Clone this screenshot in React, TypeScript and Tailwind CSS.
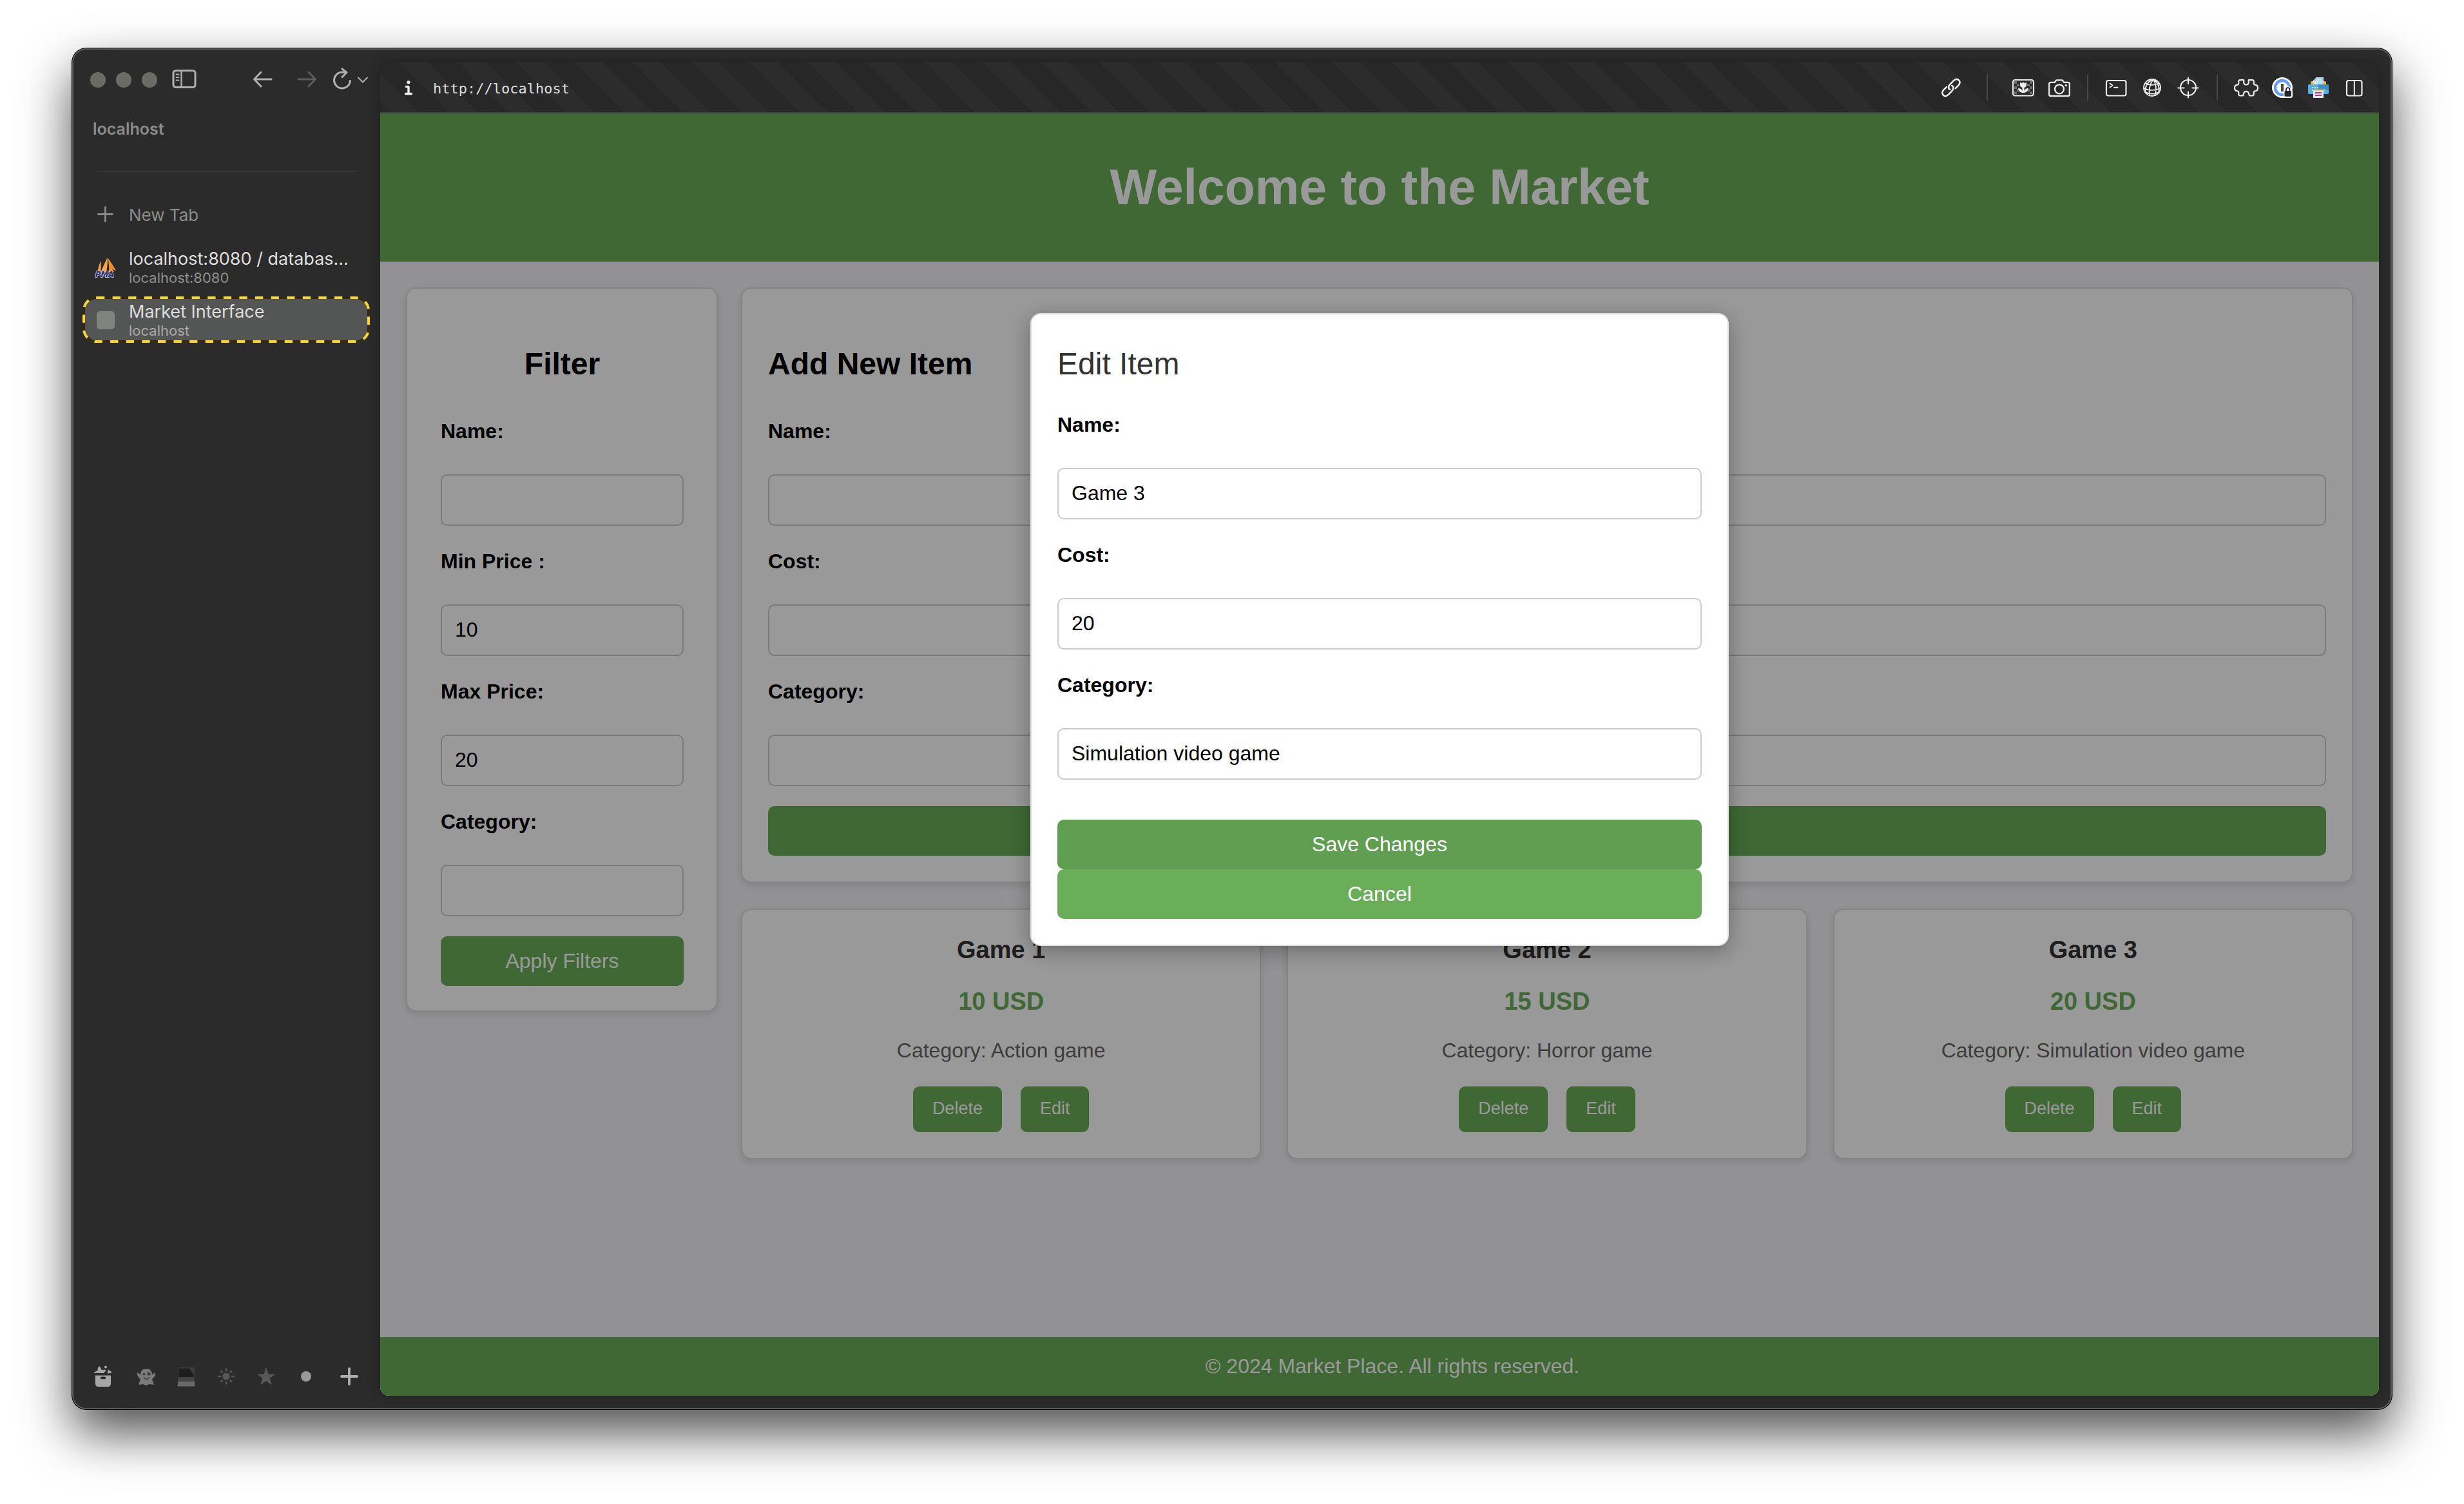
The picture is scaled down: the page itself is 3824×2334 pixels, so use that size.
import React from "react";

type IconProps = { children: React.ReactNode; className?: string };

/* 40x40 drawing area shared by every chrome icon */
function Icon({ children, className = "" }: IconProps) {
  return (
    <svg
      viewBox="0 0 40 40"
      className={`size-10 shrink-0 ${className}`}
      fill="none"
      stroke="currentColor"
      strokeWidth="2.4"
      strokeLinecap="round"
      strokeLinejoin="round"
      aria-hidden="true"
    >
      {children}
    </svg>
  );
}

function IconButton({ label, children, className = "" }: { label: string; children: React.ReactNode; className?: string }) {
  return (
    <button type="button" aria-label={label} className={`flex shrink-0 items-center justify-center ${className}`}>
      {children}
    </button>
  );
}

function WindowControls() {
  return (
    <div className="flex h-[94px] items-center pr-[17px] pl-[26px] text-[#b0b0b0]">
      <div className="flex gap-4">
        <button type="button" aria-label="Close" className="size-6 rounded-full bg-[#6b6c66]" />
        <button type="button" aria-label="Minimize" className="size-6 rounded-full bg-[#6b6c66]" />
        <button type="button" aria-label="Zoom" className="size-6 rounded-full bg-[#6b6c66]" />
      </div>
      <IconButton label="Toggle sidebar" className="ml-[22px]">
        <Icon>
          <rect x="3" y="5.500" width="34" height="26" rx="4" strokeWidth="3" />
          <path d="M15.500 6v25" strokeWidth="2.400" />
          <path d="M7.500 11.500h4M7.500 16h4M7.500 20.500h4" strokeWidth="1.800" />
        </Icon>
      </IconButton>
      <div className="ml-auto flex items-center">
        <IconButton label="Back">
          <Icon>
            <path d="M33 19H7M17 8 6.500 19 17 30" strokeWidth="3" />
          </Icon>
        </IconButton>
        <IconButton label="Forward" className="ml-7 text-[#5d5d5d]">
          <Icon>
            <path d="M7 19h26M23 8l10.500 11L23 30" strokeWidth="3" />
          </Icon>
        </IconButton>
        <IconButton label="Reload" className="ml-[15px]">
          <Icon>
            <path d="M32.500 21.500a12.500 12.500 0 1 1-12.500-13.500h6" strokeWidth="3" />
            <path d="M20 2.800 27 8.500 20 15.500" strokeWidth="3" />
          </Icon>
        </IconButton>
        <IconButton label="History" className="ml-0.5">
          <svg viewBox="0 0 20 20" className="size-5" fill="none" stroke="currentColor" strokeWidth="2" strokeLinecap="round" strokeLinejoin="round">
            <path d="m3 6.500 7 7 7-7" />
          </svg>
        </IconButton>
      </div>
    </div>
  );
}

function SailboatIcon() {
  return (
    <svg viewBox="0 0 40 40" className="size-10 shrink-0" aria-hidden="true">
      <path d="M7 27C9 20 11 12 12.500 10c.5 6 .3 12-.5 17z" fill="#e8a55a" />
      <path d="M12.500 27c3-7 7-16 10-22 .8 7 0 15-1.500 22z" fill="#f5a64a" />
      <path d="M23 5c5 6 9 13 13 20l-6-2 3 4h-8c.5-7 0-15-2-22z" fill="#ee8f2c" />
      <text x="4" y="35" fontFamily="DejaVu Sans" fontSize="11.500" fontWeight="700" fontStyle="italic" fill="#2d2f6b" stroke="#c9cbe6" strokeWidth="1.600" paintOrder="stroke">
        PMA
      </text>
    </svg>
  );
}

function TabItem({ title, host, icon, selected = false }: { title: string; host: string; icon: React.ReactNode; selected?: boolean }) {
  return (
    <button
      type="button"
      aria-current={selected ? "page" : undefined}
      className={`relative flex h-[72px] items-center gap-4 rounded-[22px] pt-0.5 pr-4 pl-4 text-left ${selected ? "bg-[#545655]" : ""}`}
    >
      {icon}
      <span className="flex min-w-0 flex-1 flex-col">
        <span className="truncate text-[27px] leading-8 text-[#dedede]">{title}</span>
        <span className={`truncate text-[22px] leading-[26px] ${selected ? "text-[#a8a9a8]" : "text-[#8f8f8f]"}`}>{host}</span>
      </span>
      {selected && (
        <span className="absolute inset-0">
          <svg className="size-full overflow-visible" fill="none" strokeWidth="4" aria-hidden="true">
            <rect x="2" y="2" width="442" height="68" rx="20" stroke="#332a10" />
            <rect x="2" y="2" width="442" height="68" rx="20" stroke="#f9d535" strokeDasharray="12.300 12.300" />
          </svg>
        </span>
      )}
    </button>
  );
}

function Spaces() {
  return (
    <div className="mt-auto flex h-[98px] items-center gap-[22px] pl-[26px] text-[#a6a6a6]">
      <IconButton label="Archive" className="mr-[5px]">
        <Icon>
          <g fill="currentColor" stroke="none">
            <path d="M8 18.500h24v13a4.500 4.500 0 0 1-4.500 4.500h-15A4.500 4.500 0 0 1 8 31.500z" />
            <path d="M6 14.500c1-2 3-2.500 5-3l1.500-6c.5-1.500 2-1.500 2.700-.3L18 10l5-.5c1.500.5 1 2-.5 3.500-.5 1.500-1.500 2-3 2H7c-1 0-1.500 0-1-.5z" />
            <circle cx="24" cy="5.500" r="2" />
            <path d="m28 9.500 5 3.500c.5 1 0 1.500-1 1.800l-4 .7c-1 0-1.500-.5-1.300-1.500z" />
          </g>
          <rect x="16" y="20.500" width="8" height="3.800" rx="1.500" fill="#2b2b2b" stroke="none" />
        </Icon>
      </IconButton>
      <IconButton label="Ghost space">
        <Icon className="text-[#7a7a7a]">
          <path d="M20 8c6 0 9 4 9 9l5-3c.5 5-2 8-5 10l3 9-7-1-5 2-5-2-7 1 3-9c-3-2-5.500-5-5-10l5 3c0-5 3-9 9-9z" fill="currentColor" stroke="none" />
          <circle cx="16.500" cy="16.500" r="1.800" fill="#3a3a3a" stroke="none" />
          <circle cx="24" cy="16" r="2.600" fill="#3a3a3a" stroke="none" />
          <path d="M16.500 22c2 3 6 3 8 0" stroke="#444" strokeWidth="1.800" />
        </Icon>
      </IconButton>
      <IconButton label="Laptop space">
        <Icon>
          <g stroke="none">
            <path d="M8 6h25v15H8z" fill="#3b3b3b" />
            <path d="M8.500 7.500h16l7 9.500v4h-23z" fill="#1e1e1e" />
            <path d="M8 21h24l1 7H7z" fill="#444" />
            <path d="M7 28h26v7.500H6.500z" fill="#6a6a6a" />
          </g>
        </Icon>
      </IconButton>
      <IconButton label="Sun space">
        <Icon className="text-[#585858]">
          <circle cx="20" cy="20" r="5.600" fill="currentColor" stroke="none" />
          <path d="M20 8.500v2.500M20 29v2.500M8.500 20H11M29 20h2.500M11.900 11.900l1.700 1.700M26.400 26.400l1.700 1.700M11.900 28.100l1.700-1.700M26.400 13.600l1.700-1.700" strokeWidth="2.600" />
        </Icon>
      </IconButton>
      <IconButton label="Star space">
        <Icon className="text-[#585858]">
          <path d="M20 7.500 23.200 17H33l-7.900 5.800L28 32.400l-8-5.700-8 5.700 2.900-9.600L7 17h9.800z" fill="currentColor" strokeWidth="1" />
        </Icon>
      </IconButton>
      <IconButton label="Dot space">
        <Icon className="text-[#999]">
          <circle cx="20" cy="20" r="8" fill="currentColor" stroke="none" />
        </Icon>
      </IconButton>
      <IconButton label="New space" className="ml-[5px]">
        <Icon className="text-[#b0b0b0]">
          <path d="M20 8v24M8 20h24" strokeWidth="3.800" />
        </Icon>
      </IconButton>
    </div>
  );
}

function Sidebar() {
  return (
    <aside className="flex w-[476px] shrink-0 flex-col font-['Inter',sans-serif]">
      <WindowControls />
      <p className="flex h-[58px] items-center pt-0.5 pl-[30px] text-[25px] font-semibold text-[#8c8c8c]">localhost</p>
      <hr className="mt-9 mr-9 ml-[34px] border-[#474747]" />
      <nav className="mt-[30px] mr-4 ml-3.5 flex flex-col gap-2.5">
        <button type="button" className="flex h-[72px] items-center gap-4 pt-0.5 pl-4 text-[26px] text-[#8c8c8c]">
          <Icon>
            <path d="M19.500 8.500v22M8.500 19.500h22" strokeWidth="2.800" />
          </Icon>
          New Tab
        </button>
        <TabItem title="localhost:8080 / databas..." host="localhost:8080" icon={<SailboatIcon />} />
        <TabItem
          selected
          title="Market Interface"
          host="localhost"
          icon={
            <span className="flex size-10 shrink-0 items-center justify-center">
              <span className="size-7 rounded-[5px] bg-[#818381]" />
            </span>
          }
        />
      </nav>
      <Spaces />
    </aside>
  );
}

function Toolbar() {
  return (
    <div className="flex h-20 items-center border-b-2 border-[#414141] bg-[repeating-linear-gradient(45deg,#272727_0_12px,#2c2c2c_12px_43px,#272727_43px_64px)] pt-0.5 pr-[18px] pl-[24px] text-[#ececec]">
      <IconButton label="Site information">
        <Icon>
          <circle cx="20" cy="11.500" r="2.600" fill="currentColor" stroke="none" />
          <path d="M16.500 18.500H20V29M15.500 29.500h9" strokeWidth="3.400" />
        </Icon>
      </IconButton>
      <input
        aria-label="Address"
        defaultValue="http://localhost"
        className="ml-[18px] h-10 w-full min-w-0 flex-1 bg-transparent pt-0.5 font-['DejaVu_Sans_Mono',monospace] text-[22px] text-[#dcdcdc] outline-none"
      />
      <IconButton label="Copy link">
        <Icon>
          <path d="M18.300 22.900c-3-1.600-3-5 .2-8.200l5-5c3-3 6.300-3.300 8.500-1.200s2 5.300-.9 8.300l-4.300 4.300" strokeWidth="2.600" />
          <path d="M21.200 16.900c3.200 1.600 3.300 5.200 0 8.500l-5 5c-3 3-6.200 3.200-8.400 1.100s-1.900-5.400 1-8.300l4-4" strokeWidth="2.600" />
        </Icon>
      </IconButton>
      <span className="mx-[35px] h-10 w-0.5 bg-[#484848]" />
      <div className="flex gap-4">
        <IconButton label="Picture in page">
          <Icon>
            <g fill="#6d6d6d" stroke="none">
              <path d="M6 10h4v4H6zM10 14h4v4h-4zM6 18h4v4H6zM10 22h4v4h-4zM6 26h4v4H6zM30 10h4v4h-4zM26 14h4v4h-4zM30 18h4v4h-4zM26 22h4v4h-4zM30 26h4v4h-4z" />
            </g>
            <rect x="4" y="8" width="32" height="24.500" rx="3.500" strokeWidth="2.200" />
            <path d="M15 11.500l2.700 1.800 2.300-2 2.300 2 2.700-1.800v4.500c0 2-1.500 3.500-3.500 3.900V25c1-2.500 3-4 6.500-4.300-.5 4.500-3.500 7.300-8 7.300s-7.500-2.800-8-7.300c3.500.3 5.500 1.800 6.500 4.300v-5.100c-2-.4-3.500-1.900-3.500-3.900z" fill="currentColor" stroke="none" />
          </Icon>
        </IconButton>
        <IconButton label="Capture">
          <Icon>
            <path d="M6.500 11.800h6.300l2-2.800c.4-.5.800-.7 1.400-.7h7.600c.6 0 1 .2 1.400.7l2 2.800h6.300c1.400 0 2.300.9 2.300 2.300v16.600c0 1.400-.9 2.300-2.300 2.300h-27c-1.400 0-2.300-.9-2.300-2.300V14.100c0-1.400.9-2.300 2.300-2.300z" strokeWidth="2.300" />
            <circle cx="20" cy="22.300" r="7" strokeWidth="2.300" />
            <circle cx="30.300" cy="16.500" r="1.700" fill="currentColor" stroke="none" />
          </Icon>
        </IconButton>
      </div>
      <span className="mx-[23px] h-10 w-0.5 bg-[#484848]" />
      <div className="flex gap-4">
        <IconButton label="Console">
          <Icon>
            <rect x="5" y="9" width="30.500" height="23.500" rx="3" strokeWidth="2.200" />
            <path d="m10.500 13.500 4 3-4 3M17 19.700h5.500" strokeWidth="2" />
          </Icon>
        </IconButton>
        <IconButton label="Network">
          <Icon>
            <g strokeWidth="1.900">
              <circle cx="20" cy="20" r="13" />
              <path d="M22 7c-5 6-7.500 15-6 25.500M22 7c4 7 5 16 2.500 25M22 7C14 10 9 16 9.500 27M22 7c6.500 4 9.500 11 8.500 20M9.500 13c7 3.500 14.500 3.500 21 0M7.200 20.500c7.500 4.500 18 4.500 25.600 0M9.500 27.500c6.500 2.500 14.500 2.500 21 0" />
            </g>
          </Icon>
        </IconButton>
        <IconButton label="Inspect">
          <Icon>
            <circle cx="20" cy="20" r="12" strokeWidth="2.200" />
            <path d="M20 4.800v9M20 26.500v9M4.500 20.500h9M26.500 20.500h9" strokeWidth="2.200" />
          </Icon>
        </IconButton>
      </div>
      <span className="mx-6 h-10 w-0.5 bg-[#484848]" />
      <div className="flex gap-4">
        <IconButton label="Extensions">
          <Icon className="overflow-visible">
            <path d="M10.500 8.200h5.500c.5.800.4 2 .2 3.100-.4 2.500 1.400 4.200 3.800 4.200s4.200-1.700 3.800-4.200c-.2-1.100-.3-2.300.2-3.100h5.500c1.700 0 2.500 1.300 2.300 3-.4 2.700.2 4.400 1.700 4.400 2.800.1 4.500 2 4.500 4.900s-1.700 4.800-4.500 4.900c-1.500 0-2.100 1.500-1.700 4 .2 1.700-.6 2.900-2.300 2.900h-4.500c-.7-.9-.8-2.100-1.100-3.300-.5-2-1.900-3.100-3.900-3.100s-3.400 1.100-3.900 3.100c-.3 1.200-.4 2.400-1.100 3.300h-4.500c-1.700 0-2.500-1.200-2.300-2.900.4-2.500-.2-4-1.700-4-2.800-.1-4.500-2-4.500-4.900s1.700-4.800 4.500-4.900c1.500 0 2.100-1.700 1.700-4.400-.2-1.700.6-3 2.300-3z" strokeWidth="2.200" />
          </Icon>
        </IconButton>
        <IconButton label="Password manager">
          <Icon>
            <g stroke="none">
              <circle cx="20" cy="20" r="16" fill="#fff" />
              <circle cx="20" cy="20" r="13.200" fill="#619dfb" />
              <circle cx="20" cy="20" r="8.800" fill="#fff" />
              <rect x="18" y="14" width="4" height="12" fill="#4a4a4a" />
              <path d="M22 26c0-2 1-3 2-3.500.5-3 2-4.500 4.500-4.500s4.500 1.800 4.700 4.500c1.800.8 2.800 1.800 2.800 4V33c0 2-1 3-3 3h-8c-2 0-3-1-3-3z" fill="#fff" />
              <rect x="23.500" y="25" width="10.500" height="8.800" rx="1.500" fill="#262626" />
            </g>
            <path d="M26 25v-2c0-1.800 1-2.800 2.700-2.800s2.700 1 2.700 2.800v2" stroke="#262626" strokeWidth="1.800" />
          </Icon>
        </IconButton>
        <IconButton label="Print">
          <Icon>
            <g stroke="none">
              <rect x="8" y="10" width="24" height="10" rx="2" fill="#f9b42a" />
              <path d="M17 4h11v12H12V9z" fill="#cfe6f8" />
              <path d="M20 4h8v12h-8z" fill="#b9daf3" />
              <path d="M17 4v5h-5z" fill="#8fc2e8" />
              <path d="M6 15h28c1.300 0 2 .7 2 2v11c0 1.300-.7 2-2 2H6c-1.300 0-2-.7-2-2V17c0-1.300.7-2 2-2z" fill="#53aeea" />
              <path d="M20 15h14c1.300 0 2 .7 2 2v6H20z" fill="#3f8fc4" />
              <path d="M10 19h2v2h-2zM14 19h2v2h-2zM18 19h2v2h-2z" fill="#d9effc" />
              <path d="M10 23h20v2H10z" fill="#f5d34b" />
              <path d="M12 25h16v11H12z" fill="#dcebfb" />
              <path d="M15 27h10v2H15zM15 31h10v2H15z" fill="#c7308d" />
            </g>
          </Icon>
        </IconButton>
        <IconButton label="Split view">
          <Icon>
            <rect x="8" y="9" width="23.500" height="23.500" rx="3" strokeWidth="2.200" />
            <path d="M19.800 9v23.500" strokeWidth="2" />
          </Icon>
        </IconButton>
      </div>
    </div>
  );
}

function Field({ id, label, value = "" }: { id: string; label: string; value?: string }) {
  return (
    <div className="mb-[37px] flex flex-col gap-[49px] last:mb-0">
      <label htmlFor={id} className="text-[32px] leading-9 font-bold text-black">{label}</label>
      <input
        id={id}
        type="text"
        defaultValue={value}
        className="h-20 w-full rounded-[10px] border-2 border-[#ccc] bg-white px-5 pb-0.5 text-[32px] text-black outline-none"
      />
    </div>
  );
}

function WideButton({ children, className = "bg-[#6aae59]" }: { children: React.ReactNode; className?: string }) {
  return (
    <button type="button" className={`block h-[77px] w-full rounded-[10px] pb-0.5 text-[32px] text-white ${className}`}>
      {children}
    </button>
  );
}

const card = "rounded-2xl border-2 border-[#ddd] bg-white shadow-[0_4px_12px_rgba(0,0,0,0.12)]";

function FilterPanel() {
  return (
    <aside className={`w-[484px] shrink-0 pt-[89px] pr-[51px] pb-[38px] pl-[52px] ${card}`}>
      <h2 className="mb-[58px] text-center text-[48px] leading-14 font-bold text-black">Filter</h2>
      <form>
        <div>
          <Field id="filter-name" label="Name:" />
          <Field id="filter-min" label="Min Price :" value="10" />
          <Field id="filter-max" label="Max Price:" value="20" />
          <Field id="filter-category" label="Category:" />
        </div>
        <div className="mt-[31px]">
          <WideButton>Apply Filters</WideButton>
        </div>
      </form>
    </aside>
  );
}

function AddItemPanel() {
  return (
    <section className={`px-10 pt-[89px] pb-10 ${card}`}>
      <h2 className="mb-[58px] text-[48px] leading-14 font-bold text-black">Add New Item</h2>
      <form>
        <div>
          <Field id="add-name" label="Name:" />
          <Field id="add-cost" label="Cost:" />
          <Field id="add-category" label="Category:" />
        </div>
        <div className="mt-[31px]">
          <WideButton>Add Item</WideButton>
        </div>
      </form>
    </section>
  );
}

const products = [
  { name: "Game 1", price: "10 USD", category: "Action game" },
  { name: "Game 2", price: "15 USD", category: "Horror game" },
  { name: "Game 3", price: "20 USD", category: "Simulation video game" },
];

function ProductCard({ name, price, category }: { name: string; price: string; category: string }) {
  return (
    <article className={`flex flex-col items-center py-10 ${card}`}>
      <h3 className="text-[38px] leading-11 font-bold text-[#333]">{name}</h3>
      <p className="mt-9 text-[38px] leading-11 font-bold text-[#6aae59]">{price}</p>
      <p className="mt-9 text-[32px] leading-9 text-[#666]">Category: {category}</p>
      <div className="mt-[38px] flex gap-[29px]">
        <button type="button" className="h-[71px] rounded-[10px] bg-[#6aae59] px-[30px] pb-0.5 text-[27px] text-white">Delete</button>
        <button type="button" className="h-[71px] rounded-[10px] bg-[#6aae59] px-[30px] pb-0.5 text-[27px] text-white">Edit</button>
      </div>
    </article>
  );
}

function EditDialog() {
  return (
    <div className="absolute inset-0 flex items-start justify-center bg-black/40 pt-[310px]">
      <div
        role="dialog"
        aria-labelledby="edit-title"
        className="w-full max-w-[1084px] rounded-2xl border-2 border-[#ddd] bg-white px-10 pt-[49px] pb-10 shadow-[0_8px_32px_rgba(0,0,0,0.3)]"
      >
        <h2 id="edit-title" className="mb-12 text-[48px] leading-14 text-[#333]">Edit Item</h2>
        <form>
          <div>
            <Field id="edit-name" label="Name:" value="Game 3" />
            <Field id="edit-cost" label="Cost:" value="20" />
            <Field id="edit-category" label="Category:" value="Simulation video game" />
          </div>
          <div className="mt-[62px]">
            <WideButton className="bg-[#609f51]">Save Changes</WideButton>
            <WideButton>Cancel</WideButton>
          </div>
        </form>
      </div>
    </div>
  );
}

function MarketPage() {
  return (
    <div className="relative flex flex-1 flex-col bg-[#f4f4f9] font-['Liberation_Sans',Arial,sans-serif]">
      <header className="flex h-[230px] items-center justify-center bg-[#6aae59]">
        <h1 className="text-[77px] font-bold text-white">Welcome to the Market</h1>
      </header>
      <main className="flex flex-1 items-start gap-9 p-10">
        <FilterPanel />
        <div className="flex min-w-0 flex-1 flex-col gap-10">
          <AddItemPanel />
          <section className="grid grid-cols-3 gap-10">
            {products.map((p) => (
              <ProductCard key={p.name} {...p} />
            ))}
          </section>
        </div>
      </main>
      <footer className="flex h-[91px] items-center justify-center bg-[#6aae59] pb-0.5 pl-10 text-[32px] text-white">
        <p>© 2024 Market Place. All rights reserved.</p>
      </footer>
      <EditDialog />
    </div>
  );
}

export default function App() {
  return (
    <div className="flex min-h-screen bg-white px-28 pt-[75px] pb-[147px]">
      <div className="flex min-w-0 flex-1 rounded-[22px] border-2 border-[#5c5d5b] bg-[#2b2b2b] shadow-[0_0_0_1px_#000,0_36px_80px_rgba(0,0,0,0.7)]">
        <Sidebar />
        <div className="flex min-w-0 flex-1 flex-col pt-[19px] pr-[18px] pb-[19px]">
          <div className="flex min-w-0 flex-1 flex-col overflow-hidden rounded-[14px] shadow-[0_0_16px_rgba(0,0,0,0.3)]">
            <Toolbar />
            <MarketPage />
          </div>
        </div>
      </div>
    </div>
  );
}
